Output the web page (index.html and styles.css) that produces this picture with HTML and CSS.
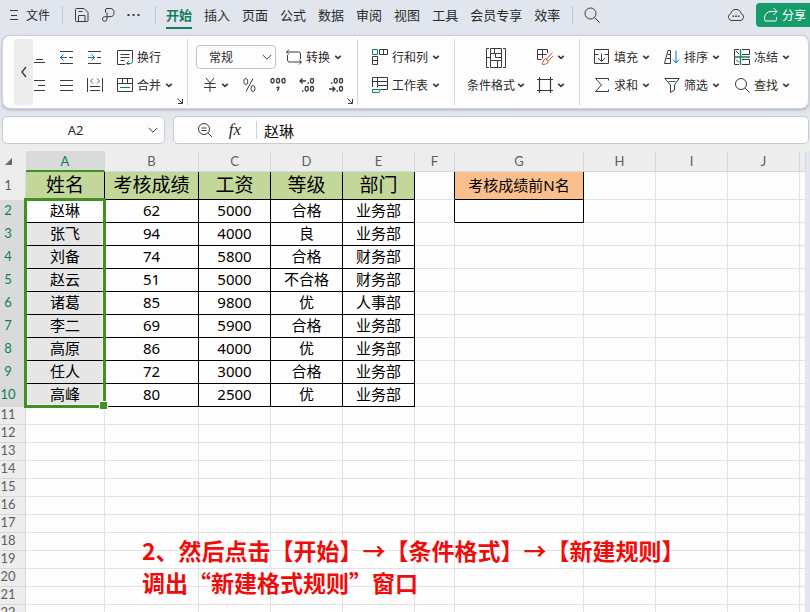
FILE: index.html
```html
<!DOCTYPE html>
<html lang="zh-CN">
<head>
<meta charset="utf-8">
<title>A2 - 赵琳</title>
<link rel="stylesheet" href="styles.css">
</head>
<body>
<svg class="sprite" aria-hidden="true">
  <symbol id="caret" viewBox="0 0 8 8"><path d="M1.2 2.8 4 5.4 6.8 2.8" stroke-width="1.6"/></symbol>
  <symbol id="chevron" viewBox="0 0 10 10"><path d="M.8 3 5 7.2 9.2 3"/></symbol>
  <symbol id="launch" viewBox="0 0 8 8"><path d="M1.5 1.5 6 6M6.5 2v4.500H2"/></symbol>
</svg>

<header class="menubar">
  <button class="file"><svg width="8" height="12" viewBox="0 0 8 12"><path d="M0 1.500h8M1 6.500h6M0 10.500h8"/></svg>文件</button>
  <span class="sep"></span>
  <div class="quick">
    <button class="icon" aria-label="保存"><svg width="16" height="16" viewBox="0 0 16 16"><path d="M1.500 2.500q0-1 1-1h7.500l4 4v8q0 1-1 1h-10.500q-1 0-1-1zM4.500 14v-5.500h6.500V14M4.500 4.500h4"/></svg></button>
    <button class="icon" aria-label="打印"><svg width="16" height="16" viewBox="0 0 16 16"><path d="M5.500 5.500V3Q5.500 1.500 7 1.500h3a4 4 0 0 1 0 8.200H4.500a2.300 2.300 0 1 0 2.500 2.300V5.500"/></svg></button>
    <button class="icon" aria-label="更多"><svg width="16" height="16" viewBox="0 0 16 16"><path d="M1.500 8h2M6.500 8h2M11.500 8h2" stroke-width="2"/></svg></button>
  </div>
  <span class="sep"></span>
  <nav class="tabs">
    <button class="tab active">开始</button>
    <button class="tab">插入</button>
    <button class="tab">页面</button>
    <button class="tab">公式</button>
    <button class="tab">数据</button>
    <button class="tab">审阅</button>
    <button class="tab">视图</button>
    <button class="tab">工具</button>
    <button class="tab">会员专享</button>
    <button class="tab">效率</button>
  </nav>
  <span class="sep"></span>
  <button class="icon" aria-label="搜索"><svg width="16" height="16" viewBox="0 0 16 16"><circle cx="6.500" cy="6.500" r="5.500"/><path d="m10.500 10.500 5 5"/></svg></button>
  <div class="account">
    <button class="cloud" aria-label="云同步"><svg width="16" height="16" viewBox="0 0 16 16"><path d="M4 13.500a3.500 3.500 0 0 1-1.200-6.800A5.300 5.300 0 0 1 13.200 6.700 3.500 3.500 0 0 1 12 13.500z"/><path d="M4.500 9.200h1.600M7.200 9.200h1.600M9.900 9.200h1.600" stroke-width="1.600"/></svg></button>
    <button class="share"><svg width="15" height="16" viewBox="0 0 15 16"><path d="M1.500 10v2.500q0 1.500 1.500 1.500h9q1.500 0 1.500-1.500V10M1.500 10Q3 4.500 8 4.500h5.500M10.500 1l3.500 3.500L10.500 8"/></svg>分享</button>
  </div>
</header>

<section class="ribbon" aria-label="开始">
  <button class="scroll" aria-label="向左滚动"><svg width="8" height="12" viewBox="0 0 8 12"><path d="M6 1 2 6l4 5" stroke-width="1.400"/></svg></button>

  <div class="group align">
    <button class="icon" aria-label="底端对齐"><svg width="16" height="16" viewBox="0 0 16 16"><path d="M3 10.500h7M1 13.500h11"/></svg></button>
    <button class="icon" aria-label="减少缩进"><svg width="16" height="16" viewBox="0 0 16 16"><path d="M1 2.500h13M10 8.500h4M1 14.500h13"/><path class="blue" d="M8 8.500H1.500M4.500 5.500l-3 3 3 3"/></svg></button>
    <button class="icon" aria-label="增加缩进"><svg width="16" height="16" viewBox="0 0 16 16"><path d="M1 2.500h13M10 8.500h4M1 14.500h13"/><path class="blue" d="M1 8.500h6.500M4.500 5.500l3 3-3 3"/></svg></button>
    <button class="cmd"><svg width="16" height="16" viewBox="0 0 16 16"><path d="M8 15.500H.5V1.500h15V10M3.500 5.500h9M3.500 8.500h9M3.500 11.500h4"/><path class="green" d="M15.500 10.500v2q0 2-2 2H10M12 12l-2.500 2.500L12 16"/></svg>换行</button>
    <button class="icon" aria-label="右对齐"><svg width="16" height="16" viewBox="0 0 16 16"><path d="M1 3.500h11M5 8.500h7M1 13.500h11"/></svg></button>
    <button class="icon" aria-label="两端对齐"><svg width="16" height="16" viewBox="0 0 16 16"><path d="M1 3.500h13M1 8.500h13M1 13.500h13"/></svg></button>
    <button class="icon" aria-label="分散对齐"><svg width="16" height="16" viewBox="0 0 16 16"><path d="M.5 1v14M15.500 1v14M3 9.500h10M3 13.500h10"/><path class="blue" d="M6 1.500 3.500 4 6 6.500M10 1.500 12.500 4 10 6.500"/></svg></button>
    <button class="cmd"><svg width="16" height="16" viewBox="0 0 16 16"><path d="M.5 1.500h15v13H.5zM.5 6.500h15M5.500 1.500v5M10.500 1.500v5"/><path class="green" d="M3 10.500h10"/></svg>合并<svg class="caret"><use href="#caret"/></svg></button>
    <button class="launcher" aria-label="对齐设置"><svg width="8" height="8"><use href="#launch"/></svg></button>
  </div>

  <div class="group number">
    <div class="row">
      <label class="format"><select aria-label="数字格式"><option>常规</option></select><svg width="10" height="10"><use href="#chevron"/></svg></label>
      <button class="cmd"><svg width="16" height="16" viewBox="0 0 16 16"><path d="M3 .5.500 3 3 5.500M.5 3h12q2 0 2 2v5M13 10.500l2.500 2.500L13 15.500M15.500 13h-12q-2 0-2-2V6"/></svg>转换<svg class="caret"><use href="#caret"/></svg></button>
    </div>
    <div class="row symbols">
      <button class="cmd" aria-label="货币"><svg width="14" height="16" viewBox="0 0 14 16"><path d="m3 1 4 5 4-5M1.500 6.500h11M1 10.500h12M7 6v9"/></svg><svg class="caret"><use href="#caret"/></svg></button>
      <button class="icon" aria-label="百分比"><svg width="16" height="16" viewBox="0 0 16 16"><path d="M12 1.500 5 14.500"/><ellipse cx="4.800" cy="4.500" rx="2" ry="3"/><ellipse cx="12" cy="11.500" rx="2" ry="3"/></svg></button>
      <button class="icon" aria-label="千位分隔"><svg class="digits" width="16" height="16" viewBox="0 0 16 16"><rect x="1" y="1.500" width="3" height="4.500" rx="1.400"/><rect x="6.500" y="1.500" width="3" height="4.500" rx="1.400"/><rect x="12" y="1.500" width="3" height="4.500" rx="1.400"/><path d="M6.500 10.500h3M8.500 9.500v2L7.500 14"/></svg></button>
      <button class="icon" aria-label="增加小数位"><svg class="digits" width="16" height="16" viewBox="0 0 16 16"><path d="M7 4H1M3.500 1.500 1 4l2.500 2.500M8.500 6H10M3 14h1.500"/><rect x="11.500" y="1.500" width="3" height="4.500" rx="1.400"/><rect x="6.200" y="9.500" width="3" height="4.500" rx="1.400"/><rect x="11.500" y="9.500" width="3" height="4.500" rx="1.400"/></svg></button>
      <button class="icon" aria-label="减少小数位"><svg class="digits" width="16" height="16" viewBox="0 0 16 16"><path d="M1 12h6M4.500 9.500 7 12l-2.500 2.500M8.500 14H10M3 6h1.500"/><rect x="11.500" y="9.500" width="3" height="4.500" rx="1.400"/><rect x="6.200" y="1.500" width="3" height="4.500" rx="1.400"/><rect x="11.500" y="1.500" width="3" height="4.500" rx="1.400"/></svg></button>
    </div>
    <button class="launcher" aria-label="数字设置"><svg width="8" height="8"><use href="#launch"/></svg></button>
  </div>

  <div class="group cells">
    <button class="cmd"><svg width="16" height="16" viewBox="0 0 16 16"><path d="M7.500.5h8v5h-8zM11.500.5v5M.5 7.500h5v8h-5zM.5 11.500h5"/><path class="green" d="M.5.5h5v5h-5z"/></svg>行和列<svg class="caret"><use href="#caret"/></svg></button>
    <button class="cmd"><svg width="16" height="16" viewBox="0 0 16 16"><path d="M.5 10V.5h15v12H9M.5 4.500h15M5.500.5v10M5.500 8.500h10"/><path class="green" d="M.5 12.500h8l-1.500 3H.5z"/></svg>工作表<svg class="caret"><use href="#caret"/></svg></button>
  </div>

  <div class="group styles">
    <button class="big"><svg width="22" height="22" viewBox="0 0 22 22"><path d="M4 1.500H1.500v19H4M18 1.500h2.500v19H18M5.500 1.500h11v5h-11zM9.500 1.500v5M5.500 6.500v7h11M5.500 10.500h-4M10.500 6.500v4h6M16.500 6.500v7M5.500 13.500v7h11v-7M12.500 13.500v7"/></svg><span>条件格式<svg class="caret"><use href="#caret"/></svg></span></button>
    <div class="stack">
      <button class="cmd" aria-label="单元格样式"><svg width="16" height="16" viewBox="0 0 16 16"><path d="M4.500 10.500H.5V.5h10V4M.5 5.500h9M5.500.5v9"/><path class="orange" d="M15.500 3.500 9.500 10M16 7l-4.500 5M8.500 10q3 .5 2.500 3-.5 2.500-5 2.500Q4 15.500 6 13q.5-3 2.500-3z"/></svg><svg class="caret"><use href="#caret"/></svg></button>
      <button class="cmd" aria-label="边框"><svg width="16" height="16" viewBox="0 0 16 16"><path d="M0 2.500h16M0 13.500h16M2.500 0v16M13.500 0v16" stroke-width="1.200"/></svg><svg class="caret"><use href="#caret"/></svg></button>
    </div>
  </div>

  <div class="group edit">
    <button class="cmd"><svg width="16" height="16" viewBox="0 0 16 16"><path d="M.5.500h14v14H.5zM.5 5.500H4.500M10.500 5.500h4M7.500 4.500v8M4 9l3.500 3.500L11 9"/></svg>填充<svg class="caret"><use href="#caret"/></svg></button>
    <button class="cmd"><svg width="16" height="16" viewBox="0 0 16 16"><path d="M.5 14.500 4 1.500h2.500v13zM2.500 9.500h4M3.500 5.500h3"/><path class="blue" d="M12 1.500V14M9 10.500l3 3.500 3-3.500"/></svg>排序<svg class="caret"><use href="#caret"/></svg></button>
    <button class="cmd"><svg width="16" height="16" viewBox="0 0 16 16"><path d="M5 .5H.5V15.500H5M8 .5h7.500v5H8M8 10.500h7.500v5H8M2 2l3 3M2 10.500l3 3"/><path class="green" d="M0 8h16M6.500 0v16" stroke-width="1.300"/></svg>冻结<svg class="caret"><use href="#caret"/></svg></button>
    <button class="cmd"><svg width="16" height="16" viewBox="0 0 16 16"><path d="M14.500 3.500v-2h-13l6 6.500-6 6.500h13v-2"/></svg>求和<svg class="caret"><use href="#caret"/></svg></button>
    <button class="cmd"><svg width="16" height="16" viewBox="0 0 16 16"><path d="M.8 1.500h14.400L10.500 8v5l-4 2.500V8z"/><path class="green" d="M4.500 4.500h7"/></svg>筛选<svg class="caret"><use href="#caret"/></svg></button>
    <button class="cmd"><svg width="16" height="16" viewBox="0 0 16 16"><circle cx="7" cy="7" r="5.500"/><path d="m11 11 4.500 4.500"/></svg>查找<svg class="caret"><use href="#caret"/></svg></button>
  </div>
</section>

<section class="formula-row">
  <div class="name-box"><input aria-label="名称框" value="A2"><svg width="10" height="10"><use href="#chevron"/></svg></div>
  <div class="formula">
    <button class="icon" aria-label="放大"><svg width="16" height="16" viewBox="0 0 16 16"><circle cx="7" cy="7" r="5.500"/><path d="m11 11 4 4M4.500 6h5M4.500 8.500h5"/></svg></button>
    <button class="fx" aria-label="插入函数">fx</button>
    <input aria-label="编辑栏" value="赵琳">
  </div>
</section>

<main class="sheet">
  <table>
    <colgroup><col class="c-row"><col class="c-a"><col class="c-b"><col class="c-m"><col class="c-m"><col class="c-m"><col class="c-f"><col class="c-g"><col class="c-m"><col class="c-m"><col class="c-m"><col></colgroup>
    <thead>
      <tr><th class="corner"><svg width="7" height="7" viewBox="0 0 8 8"><path d="M8 0v8H0z"/></svg></th><th class="on">A</th><th>B</th><th>C</th><th>D</th><th>E</th><th>F</th><th>G</th><th>H</th><th>I</th><th>J</th><th></th></tr>
    </thead>
    <tbody class="data">
      <tr class="title"><th>1</th><td class="d">姓名</td><td class="d">考核成绩</td><td class="d">工资</td><td class="d">等级</td><td class="d">部门</td><td class="edge"></td><td class="d top">考核成绩前N名</td><td></td><td></td><td></td><td></td></tr>
      <tr><th>2</th><td class="d">赵琳</td><td class="d">62</td><td class="d">5000</td><td class="d">合格</td><td class="d">业务部</td><td class="edge"></td><td class="d"></td><td></td><td></td><td></td><td></td></tr>
      <tr class="sel"><th>3</th><td class="d">张飞</td><td class="d">94</td><td class="d">4000</td><td class="d">良</td><td class="d">业务部</td><td></td><td></td><td></td><td></td><td></td><td></td></tr>
      <tr class="sel"><th>4</th><td class="d">刘备</td><td class="d">74</td><td class="d">5800</td><td class="d">合格</td><td class="d">财务部</td><td></td><td></td><td></td><td></td><td></td><td></td></tr>
      <tr class="sel"><th>5</th><td class="d">赵云</td><td class="d">51</td><td class="d">5000</td><td class="d">不合格</td><td class="d">财务部</td><td></td><td></td><td></td><td></td><td></td><td></td></tr>
      <tr class="sel"><th>6</th><td class="d">诸葛</td><td class="d">85</td><td class="d">9800</td><td class="d">优</td><td class="d">人事部</td><td></td><td></td><td></td><td></td><td></td><td></td></tr>
      <tr class="sel"><th>7</th><td class="d">李二</td><td class="d">69</td><td class="d">5900</td><td class="d">合格</td><td class="d">业务部</td><td></td><td></td><td></td><td></td><td></td><td></td></tr>
      <tr class="sel"><th>8</th><td class="d">高原</td><td class="d">86</td><td class="d">4000</td><td class="d">优</td><td class="d">业务部</td><td></td><td></td><td></td><td></td><td></td><td></td></tr>
      <tr class="sel"><th>9</th><td class="d">任人</td><td class="d">72</td><td class="d">3000</td><td class="d">合格</td><td class="d">业务部</td><td></td><td></td><td></td><td></td><td></td><td></td></tr>
      <tr class="sel"><th>10</th><td class="d">高峰</td><td class="d">80</td><td class="d">2500</td><td class="d">优</td><td class="d">业务部</td><td></td><td></td><td></td><td></td><td></td><td></td></tr>
    </tbody>
    <tbody class="blank">
      <tr><th>11</th><td></td><td></td><td></td><td></td><td></td><td></td><td></td><td></td><td></td><td></td><td></td></tr>
      <tr><th>12</th><td></td><td></td><td></td><td></td><td></td><td></td><td></td><td></td><td></td><td></td><td></td></tr>
      <tr><th>13</th><td></td><td></td><td></td><td></td><td></td><td></td><td></td><td></td><td></td><td></td><td></td></tr>
      <tr><th>14</th><td></td><td></td><td></td><td></td><td></td><td></td><td></td><td></td><td></td><td></td><td></td></tr>
      <tr><th>15</th><td></td><td></td><td></td><td></td><td></td><td></td><td></td><td></td><td></td><td></td><td></td></tr>
      <tr><th>16</th><td></td><td></td><td></td><td></td><td></td><td></td><td></td><td></td><td></td><td></td><td></td></tr>
      <tr><th>17</th><td></td><td></td><td></td><td></td><td></td><td></td><td></td><td></td><td></td><td></td><td></td></tr>
      <tr><th>18</th><td></td><td></td><td></td><td></td><td></td><td></td><td></td><td></td><td></td><td></td><td></td></tr>
      <tr><th>19</th><td></td><td></td><td></td><td></td><td></td><td></td><td></td><td></td><td></td><td></td><td></td></tr>
      <tr><th>20</th><td></td><td></td><td></td><td></td><td></td><td></td><td></td><td></td><td></td><td></td><td></td></tr>
      <tr><th>21</th><td></td><td></td><td></td><td></td><td></td><td></td><td></td><td></td><td></td><td></td><td></td></tr>
      <tr><th>22</th><td></td><td></td><td></td><td></td><td></td><td></td><td></td><td></td><td></td><td></td><td></td></tr>
    </tbody>
  </table>
  <div class="selection"></div>
  <p class="note">2、然后点击【开始】→【条件格式】→【新建规则】<br>调出“新建格式规则”窗口</p>
</main>
</body>
</html>
```
FILE: styles.css
```css
* { box-sizing: border-box; }

body {
  margin: 0;
  height: 100vh;
  overflow: hidden;
  display: flex;
  flex-direction: column;
  background: #ededed linear-gradient(#e1e6ee, #e1e6ee 110px, #ededed 150px) no-repeat;
  color: #2b2b2b;
  font: 12px/16px "Noto Sans CJK SC", sans-serif;
}

button, input, select {
  margin: 0;
  padding: 0;
  border: 0;
  background: none;
  color: inherit;
  font: inherit;
  white-space: nowrap;
}

svg {
  flex: none;
  fill: none;
  stroke: #3a3a3a;
}
.sprite { position: absolute; width: 0; height: 0; }
.caret { width: 8px; height: 8px; }
.blue { stroke: #1b6fc2; }
.green { stroke: #12805c; }
.orange { stroke: #d4572a; }
.digits { stroke-width: 1.3; }

/* Menu bar */
.menubar {
  flex: none;
  display: flex;
  align-items: center;
  height: 30px;
  margin-bottom: 5px;
  padding-left: 10px;
  overflow: hidden;
}
.file { display: flex; align-items: center; gap: 8px; }
.sep {
  flex: none;
  width: 1px;
  height: 18px;
  margin: 0 10px 0 12px;
  background: #c3c7cf;
}
.quick { display: flex; gap: 8px; }
.icon {
  display: flex;
  align-items: center;
  justify-content: center;
  width: 18px;
  height: 18px;
}
.tabs { display: flex; gap: 12px; }
.tab {
  height: 28px;
  border-top: 2px solid transparent;
  border-bottom: 2px solid transparent;
  font-size: 13px;
}
.tab.active {
  border-bottom-color: #12805c;
  color: #12805c;
  font-weight: 700;
}
.account {
  display: flex;
  align-items: center;
  gap: 12px;
  margin-left: auto;
}
.cloud { display: flex; }
.share {
  display: flex;
  align-items: center;
  gap: 4px;
  height: 24px;
  padding: 0 4px 0 7px;
  border-radius: 4px 0 0 4px;
  background: #169b6b;
  color: #fff;
}
.share svg { stroke: #fff; }

/* Ribbon */
.ribbon {
  flex: none;
  display: flex;
  margin: 0 1px 0 2px;
  padding: 3px 0 3px 11px;
  border: 1px solid #cdd2da;
  border-radius: 8px;
  background: #fdfdfd;
  box-shadow: 0 1px 3px #a9b0bb;
}
.scroll {
  display: flex;
  align-items: center;
  justify-content: center;
  width: 19px;
  border-radius: 4px;
  background: #ececec;
}
.group {
  position: relative;
  flex: none;
  height: 66px;
  padding-top: 4px;
  border-right: 1px solid #d2d5da;
}
.group:last-child { border-right: 0; }
.row, .cmd { display: flex; align-items: center; height: 28px; }
.cmd { gap: 4px; }
.launcher {
  position: absolute;
  right: 3px;
  bottom: 0;
  display: flex;
}
.align {
  display: grid;
  grid-template-columns: 26px 28px 30px 70px;
  grid-template-rows: 28px 28px;
  align-items: center;
}
.align .icon { width: 16px; }
.number { padding: 4px 12px 0 8px; }
.number .row { gap: 10px; }
.number .symbols { gap: 11px; padding-left: 7px; }
.format {
  position: relative;
  display: flex;
  align-items: center;
}
.format select {
  appearance: none;
  width: 80px;
  height: 24px;
  padding-left: 12px;
  border: 1px solid #bfc3ca;
  border-radius: 4px;
}
.format svg { position: absolute; right: 4px; }
.cells { padding: 4px 14px 0; }
.styles { display: flex; gap: 12px; padding: 4px 14px 0 12px; }
.big {
  display: flex;
  flex-direction: column;
  align-items: center;
  height: 56px;
}
.big svg { margin: 4px 0 0; }
.big span {
  display: flex;
  align-items: center;
  gap: 2px;
  margin-top: 8px;
}
.big .caret { margin: 0; }
.edit {
  display: grid;
  grid-template-columns: repeat(3, 56px);
  grid-template-rows: 28px 28px;
  column-gap: 14px;
  padding: 4px 14px 0;
}

/* Name box and formula bar */
.formula-row {
  flex: none;
  display: flex;
  gap: 8px;
  margin: 7px 1px 7px 2px;
}
.name-box, .formula {
  display: flex;
  align-items: center;
  height: 28px;
  border: 1px solid #c6cad1;
  border-radius: 5px;
  background: #fdfdfd;
}
.name-box { width: 163px; padding-right: 6px; }
.name-box input {
  flex: 1;
  min-width: 0;
  padding-left: 0;
  font-family: "Noto Sans", sans-serif;
  font-size: 13px;
  text-align: center;
}
.formula { flex: 1; gap: 13px; padding-left: 22px; }
.fx {
  width: 16px;
  font: italic 17px/20px "Liberation Serif", serif;
}
.formula input {
  flex: 1;
  height: 18px;
  padding-left: 7px;
  border-left: 1px solid #cfd2d7;
  color: #111;
  font-size: 15px;
}

/* Sheet */
.sheet {
  position: relative;
  flex: 1;
  min-height: 0;
  overflow: hidden;
  padding-right: 4px;
  background: #e2e7ef;
}
table {
  width: 100%;
  table-layout: fixed;
  border-collapse: separate;
  border-spacing: 0;
  background: #fdfdfd;
}
.c-row { width: 26px; }
.c-a { width: 79px; }
.c-b { width: 94px; }
.c-m { width: 72px; }
.c-f { width: 40px; }
.c-g { width: 129px; }
th, td {
  padding: 0;
  border-right: 1px solid #e2e2e2;
  border-bottom: 1px solid #e2e2e2;
  text-align: center;
  vertical-align: middle;
  white-space: nowrap;
}
th {
  border-color: #d8d8d8;
  background: #ededed;
  color: #5c5f62;
  font: 13px/16px Lato, sans-serif;
}
thead th { height: 21px; }
thead .on {
  border-bottom: 2px solid #40911f;
  background: #d8dbda;
  color: #137a58;
}
.corner { border-color: #ededed; }
.corner svg { display: block; margin-left: 5px; fill: #6a6a6a; stroke: none; }
tbody th { padding-right: 9px; }
.data tr { height: 23px; }
.data .title { height: 28px; }
.data th {
  padding-bottom: 2px;
  border-bottom-color: #d8dbda;
  background: #d8dbda;
  color: #137a58;
}
.data .title th { border-bottom-color: #ededed; background: #ededed; color: #5c5f62; }
.data td {
  padding-bottom: 2px;
  color: #000;
  font: 15px/20px "Noto Sans", "Noto Sans CJK SC", sans-serif;
}
.data .d { border-color: #000; }
.edge { border-right-color: #000; }
.title .d { background: #c4d79b; font-size: 19px; }
.data .title .top { background: #fabf8f; font-size: 15px; }
.sel th + td {
  background: #e6e6e6;
  box-shadow: inset 2px 0 #fdfdfd, inset -2px 0 #fdfdfd;
}
.sel:last-child th + td {
  box-shadow: inset 2px 0 #fdfdfd, inset -2px 0 #fdfdfd, inset 0 -2px #fdfdfd;
}
.blank tr { height: 18px; }
.blank th { line-height: 15px; padding-bottom: 2px; }
.selection {
  position: absolute;
  top: 47px;
  left: 24px;
  width: 82px;
  height: 210px;
  border: 3px solid #40911f;
}
.selection::after {
  content: "";
  position: absolute;
  right: -5px;
  bottom: -5px;
  width: 7px;
  height: 7px;
  border: 1px solid #fdfdfd;
  background: #40911f;
}
.note {
  position: absolute;
  top: 383px;
  left: 142px;
  margin: 0;
  color: #ee0d0b;
  font-size: 23px;
  font-weight: 700;
  line-height: 32px;
  white-space: nowrap;
}
```
